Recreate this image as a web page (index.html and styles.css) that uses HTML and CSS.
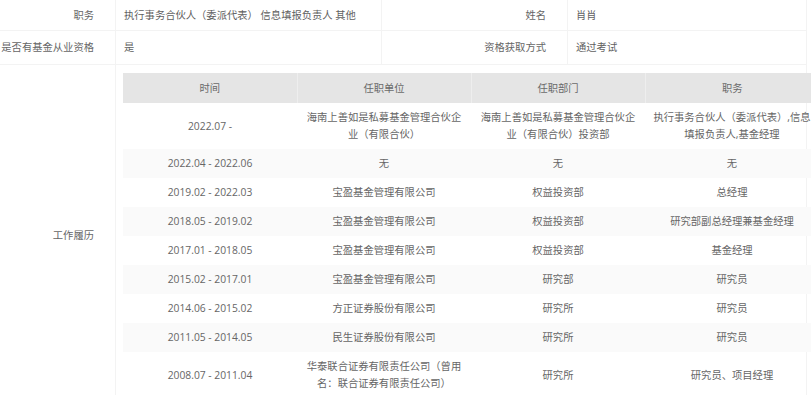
FILE: index.html
```html
<!DOCTYPE html>
<html lang="zh-CN">
<head>
<meta charset="utf-8">
<title>基金从业人员信息</title>
<link rel="stylesheet" href="styles.css">
</head>
<body>
<div class="info">
  <div class="cell label">职务</div>
  <div class="cell value">执行事务合伙人（委派代表） 信息填报负责人 其他</div>
  <div class="cell label">姓名</div>
  <div class="cell value">肖肖</div>

  <div class="cell label">是否有基金从业资格</div>
  <div class="cell value">是</div>
  <div class="cell label">资格获取方式</div>
  <div class="cell value">通过考试</div>

  <div class="cell label exp-label">工作履历</div>
  <div class="cell exp-value">
    <table class="history">
      <colgroup>
        <col class="c"><col class="c"><col class="c"><col class="c">
      </colgroup>
      <thead>
        <tr><th>时间</th><th>任职单位</th><th>任职部门</th><th>职务</th></tr>
      </thead>
      <tbody>
        <tr><td>2022.07 -</td><td>海南上善如是私募基金管理合伙企业（有限合伙）</td><td>海南上善如是私募基金管理合伙企业（有限合伙）投资部</td><td>执行事务合伙人（委派代表）,信息填报负责人,基金经理</td></tr>
        <tr><td>2022.04 - 2022.06</td><td>无</td><td>无</td><td>无</td></tr>
        <tr><td>2019.02 - 2022.03</td><td>宝盈基金管理有限公司</td><td>权益投资部</td><td>总经理</td></tr>
        <tr><td>2018.05 - 2019.02</td><td>宝盈基金管理有限公司</td><td>权益投资部</td><td>研究部副总经理兼基金经理</td></tr>
        <tr><td>2017.01 - 2018.05</td><td>宝盈基金管理有限公司</td><td>权益投资部</td><td>基金经理</td></tr>
        <tr><td>2015.02 - 2017.01</td><td>宝盈基金管理有限公司</td><td>研究部</td><td>研究员</td></tr>
        <tr><td>2014.06 - 2015.02</td><td>方正证券股份有限公司</td><td>研究所</td><td>研究员</td></tr>
        <tr><td>2011.05 - 2014.05</td><td>民生证券股份有限公司</td><td>研究所</td><td>研究员</td></tr>
        <tr><td>2008.07 - 2011.04</td><td>华泰联合证券有限责任公司（曾用名：联合证券有限责任公司）</td><td>研究所</td><td>研究员、项目经理</td></tr>
      </tbody>
    </table>
  </div>
</div>
</body>
</html>
```
FILE: styles.css
```css
html, body {
  margin: 0;
  padding: 0;
  background: #ffffff;
  overflow: hidden;
}

body {
  font-family: "Open Sans", "Noto Sans CJK SC", sans-serif;
  font-size: 10.3px;
  color: #666666;
  width: 811px;
  height: 395px;
}

.info {
  display: grid;
  grid-template-columns: 116px 266px 186px 239px;
  grid-template-rows: 31px 34px auto;
}

.cell {
  box-sizing: border-box;
  border-right: 1px solid #f3f3f3;
  border-bottom: 1px solid #f3f3f3;
  display: flex;
  align-items: center;
  line-height: 17px;
  white-space: nowrap;
}

.label {
  justify-content: flex-end;
  padding-right: 21px;
  color: #666666;
}

.value {
  padding-left: 8px;
  color: #5f5f5f;
}

.exp-value {
  grid-column: 2 / 5;
  padding: 8px 0 8px 7px;
  align-items: flex-start;
  overflow: visible;
}

.history {
  border-collapse: collapse;
  table-layout: fixed;
  width: 696px;
  flex: none;
}

.history col.c {
  width: 174px;
}

.history th {
  background: #e5e5e5;
  font-weight: normal;
  color: #6a6a6a;
  height: 30px;
  padding: 0 7px;
  line-height: 17px;
  text-align: center;
  border-left: 1px solid #eeeeee;
}

.history th:first-child {
  border-left: none;
}

.history td {
  padding: 6px 7px;
  line-height: 17px;
  text-align: center;
  white-space: normal;
  color: #666666;
  vertical-align: middle;
}

.history tbody tr:nth-child(even) td {
  background: #fafafa;
}
```
